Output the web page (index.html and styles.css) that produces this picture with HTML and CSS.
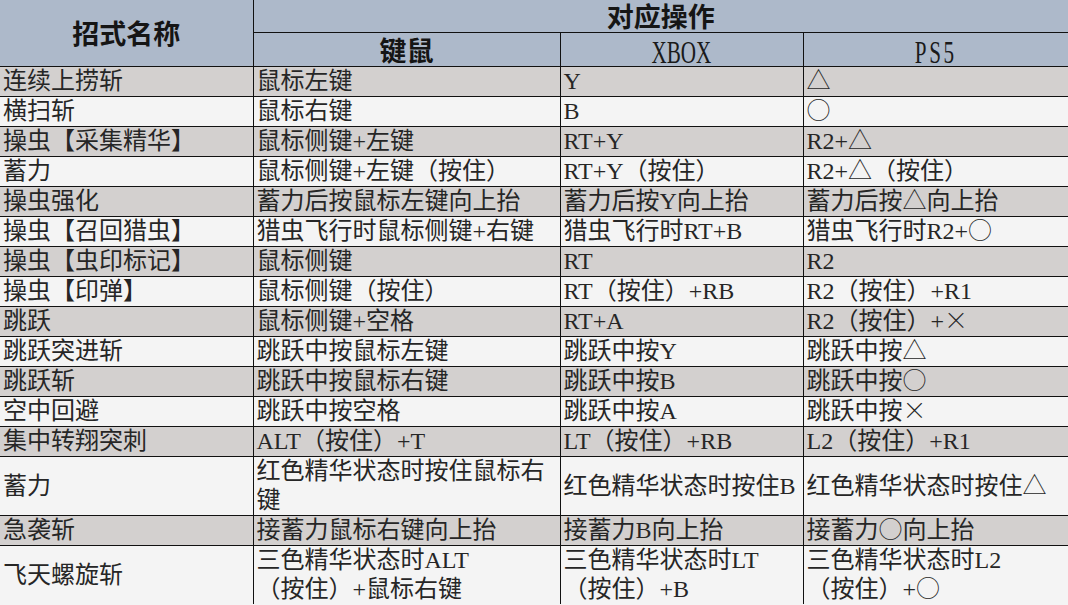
FILE: index.html
```html
<!DOCTYPE html>
<html lang="zh-CN">
<head>
<meta charset="utf-8">
<title>招式操作对照表</title>
<link rel="stylesheet" href="styles.css">
</head>
<body>
<table class="moves">
  <colgroup>
    <col class="c-name"><col class="c-kb"><col class="c-xbox"><col class="c-ps">
  </colgroup>
  <thead>
    <tr class="h1">
      <th rowspan="2" class="hname">招式名称</th>
      <th colspan="3">对应操作</th>
    </tr>
    <tr class="h2">
      <th>键鼠</th>
      <th><span class="lat">XBOX</span></th>
      <th><span class="lat lat-wide">PS5</span></th>
    </tr>
  </thead>
  <tbody>
    <tr><td>连续上捞斩</td><td>鼠标左键</td><td>Y</td><td><span class="sym">△</span></td></tr>
    <tr><td>横扫斩</td><td>鼠标右键</td><td>B</td><td><span class="sym">○</span></td></tr>
    <tr><td>操虫【采集精华】</td><td>鼠标侧键+左键</td><td>RT+Y</td><td>R2+<span class="sym">△</span></td></tr>
    <tr><td>蓄力</td><td>鼠标侧键+左键（按住）</td><td>RT+Y（按住）</td><td>R2+<span class="sym">△</span>（按住）</td></tr>
    <tr><td>操虫强化</td><td>蓄力后按鼠标左键向上抬</td><td>蓄力后按Y向上抬</td><td>蓄力后按<span class="sym">△</span>向上抬</td></tr>
    <tr><td>操虫【召回猎虫】</td><td>猎虫飞行时鼠标侧键+右键</td><td>猎虫飞行时RT+B</td><td>猎虫飞行时R2+<span class="sym">○</span></td></tr>
    <tr><td>操虫【虫印标记】</td><td>鼠标侧键</td><td>RT</td><td>R2</td></tr>
    <tr><td>操虫【印弹】</td><td>鼠标侧键（按住）</td><td>RT（按住）+RB</td><td>R2（按住）+R1</td></tr>
    <tr><td>跳跃</td><td>鼠标侧键+空格</td><td>RT+A</td><td>R2（按住）+<span class="sym">×</span></td></tr>
    <tr><td>跳跃突进斩</td><td>跳跃中按鼠标左键</td><td>跳跃中按Y</td><td>跳跃中按<span class="sym">△</span></td></tr>
    <tr><td>跳跃斩</td><td>跳跃中按鼠标右键</td><td>跳跃中按B</td><td>跳跃中按<span class="sym">○</span></td></tr>
    <tr><td>空中回避</td><td>跳跃中按空格</td><td>跳跃中按A</td><td>跳跃中按<span class="sym">×</span></td></tr>
    <tr><td>集中转翔突刺</td><td>ALT（按住）+T</td><td>LT（按住）+RB</td><td>L2（按住）+R1</td></tr>
    <tr><td>蓄力</td><td>红色精华状态时按住鼠标右键</td><td>红色精华状态时按住B</td><td>红色精华状态时按住<span class="sym">△</span></td></tr>
    <tr><td>急袭斩</td><td>接蓄力鼠标右键向上抬</td><td>接蓄力B向上抬</td><td>接蓄力<span class="sym">○</span>向上抬</td></tr>
    <tr><td>飞天螺旋斩</td><td>三色精华状态时ALT<br>（按住）+鼠标右键</td><td>三色精华状态时LT<br>（按住）+B</td><td>三色精华状态时L2<br>（按住）+<span class="sym">○</span></td></tr>
  </tbody>
</table>
</body>
</html>
```

FILE: styles.css
```css
html, body {
  margin: 0;
  padding: 0;
  background: #f4f4f4;
  overflow: hidden;
}

.moves {
  border-collapse: collapse;
  border-style: hidden;
  width: 1068px;
  table-layout: fixed;
  font-family: "Liberation Serif", "Noto Sans CJK SC", serif;
  color: #262626;
}

.c-name { width: 253px; }
.c-kb { width: 307px; }
.c-xbox { width: 243px; }
.c-ps { width: 265px; }

.moves th,
.moves td {
  border: 1px solid #111;
  padding: 0 3px;
}

.moves th {
  background: #adb9ca;
  font-family: "Noto Sans CJK SC", sans-serif;
  font-weight: 700;
  font-size: 27px;
  text-align: center;
  color: #151515;
  line-height: 28px;
}

.h1 th { height: 32px; }
.h2 th { height: 33px; }

.moves th .lat {
  display: inline-block;
  font-family: "Liberation Serif", serif;
  font-weight: 400;
  font-size: 32px;
  line-height: 26px;
  vertical-align: middle;
  transform: scaleX(0.66);
  color: #1a1a1a;
}

.moves th .lat-wide {
  letter-spacing: 4px;
}

.moves td {
  font-size: 24px;
  line-height: 29px;
  height: 29px;
  vertical-align: middle;
  text-align: left;
  word-break: break-all;
}

.moves tbody tr:nth-child(odd) td { background: #d3d0cf; }
.moves tbody tr:nth-child(even) td { background: #f4f4f4; }

.sym {
  display: inline-block;
  line-height: 24px;
  font-family: "Noto Sans CJK SC", sans-serif;
  font-weight: 300;
}
```
